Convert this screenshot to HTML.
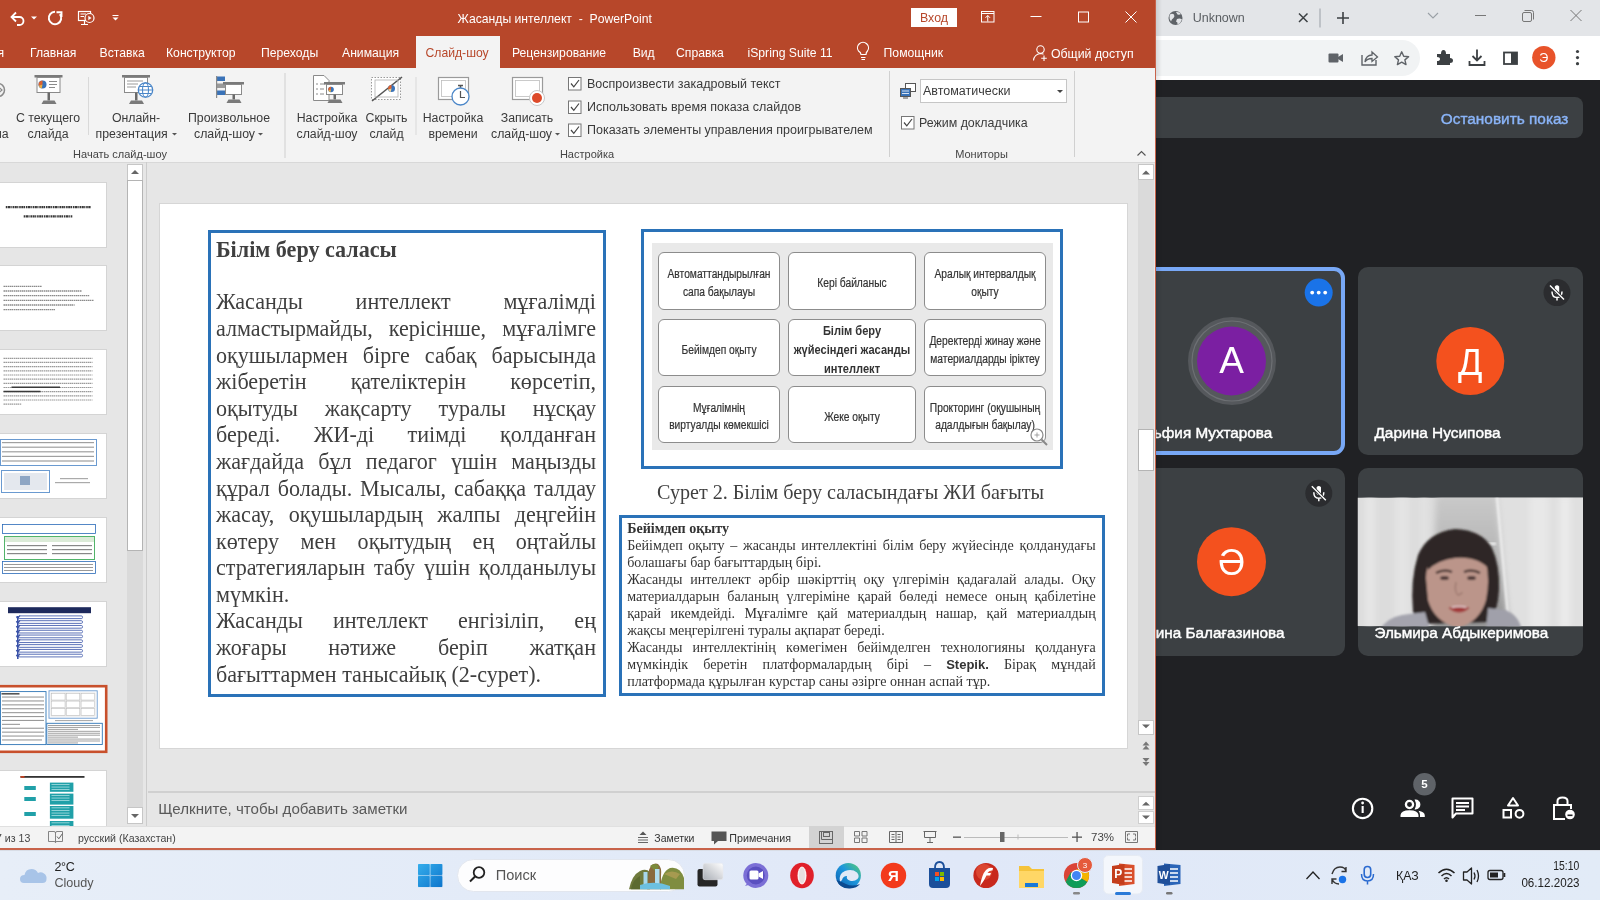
<!DOCTYPE html>
<html><head><meta charset="utf-8">
<style>
*{margin:0;padding:0;box-sizing:border-box}
html,body{width:1600px;height:900px;overflow:hidden;background:#202124;font-family:"Liberation Sans",sans-serif;position:relative}
.a{position:absolute}
.t{white-space:nowrap}
svg{overflow:visible}
#root{position:absolute;left:0;top:0;width:1600px;height:900px;overflow:hidden;will-change:transform}
</style></head><body><div id="root">
<!-- chrome -->
<div class="a" style="left:1156px;top:0px;width:444px;height:36px;background:#e3e5e8;"></div>
<div class="a" style="left:1156px;top:36px;width:444px;height:44px;background:#fff;"></div>
<div class="a" style="left:1156px;top:40px;width:264px;height:36px;background:#f1f3f4;border-radius:0 18px 18px 0;"></div>
<svg class="a" style="left:0px;top:0px;" width="1600" height="100" viewBox="0 0 1600 100"><circle cx="1175.5" cy="18" r="7" fill="#5f6368"/><path d="M1170 14.5 Q1172 13 1174 14.5 Q1175 16.5 1173.5 18 Q1171.5 19 1171 21.5 Q1169 19 1169.5 16Z" fill="#e3e5e8"/><path d="M1176 12 Q1179 11.5 1181 14 Q1179.5 15 1177.5 14.5Z M1177 19 Q1180 18 1182 19.5 Q1181 23 1177.5 24.5 Q1178 22 1176 21.5Z" fill="#e3e5e8"/><path d="M1299 13.5 L1307.5 22 M1307.5 13.5 L1299 22" stroke="#3c4043" stroke-width="1.5"/><rect x="1319.5" y="8.5" width="1" height="19" fill="#9aa0a6"/><path d="M1343 12 V24 M1337 18 H1349" stroke="#3c4043" stroke-width="1.6"/><path d="M1428 13 L1433 18 L1438 13" fill="none" stroke="#9aa0a6" stroke-width="1.1"/><path d="M1475 15.5 H1486" stroke="#777" stroke-width="1"/><rect x="1522.5" y="12.5" width="9" height="9" rx="1.5" fill="none" stroke="#777" stroke-width="1"/><path d="M1524.5 10.5 H1531.5 Q1533.5 10.5 1533.5 12.5 V19.5" fill="none" stroke="#777" stroke-width="1"/><path d="M1570.5 10 L1581.5 21 M1581.5 10 L1570.5 21" stroke="#777" stroke-width="1"/><rect x="1328.5" y="53.5" width="10" height="9" rx="1" fill="#5f6368"/><path d="M1338 57 L1343 54 V62 L1338 59Z" fill="#5f6368"/><path d="M1362 55 V65 H1376 V60" fill="none" stroke="#5f6368" stroke-width="1.4"/><path d="M1365 62 Q1366 55 1372 55 V52 L1377.5 57 L1372 61.5 V58.5 Q1367 58.5 1365 62Z" fill="none" stroke="#5f6368" stroke-width="1.3"/><path d="M1401.7 51.8 L1403.7 56.3 L1408.6 56.7 L1404.9 59.9 L1406 64.6 L1401.7 62.1 L1397.4 64.6 L1398.5 59.9 L1394.8 56.7 L1399.7 56.3Z" fill="none" stroke="#5f6368" stroke-width="1.4" stroke-linejoin="round"/><path d="M1437 54 H1441 Q1441 50 1443.5 50 Q1446 50 1446 54 H1450 V58 Q1453 58 1453 60.5 Q1453 63 1450 63 V65 H1437 V61 Q1440 61 1440 59 Q1440 57 1437 57Z" fill="#3c4043"/><path d="M1477 49.5 V60 M1472.5 56 L1477 60.5 L1481.5 56" fill="none" stroke="#3c4043" stroke-width="1.8"/><path d="M1469.5 61 V65 H1484.5 V61" fill="none" stroke="#3c4043" stroke-width="1.8"/><rect x="1504" y="52.5" width="13" height="11.5" fill="none" stroke="#3c4043" stroke-width="1.8"/><rect x="1511" y="52.5" width="6" height="11.5" fill="#3c4043"/><circle cx="1543.8" cy="57.6" r="11.7" fill="#e8532a"/><circle cx="1577.5" cy="51.5" r="1.6" fill="#3c4043"/><circle cx="1577.5" cy="57.6" r="1.6" fill="#3c4043"/><circle cx="1577.5" cy="63.7" r="1.6" fill="#3c4043"/></svg>
<div class="a t " style="top:10.78px;font-size:12.5px;line-height:14.37px;color:#5a5e62;left:1192.7px;">Unknown</div>
<div class="a t " style="top:50.98px;font-size:12.5px;line-height:14.37px;color:#fff;left:1543.8px;transform:translateX(-50%);">Э</div>
<!-- meet -->
<div class="a" style="left:1156px;top:80px;width:444px;height:770px;background:#202124;"></div>
<div class="a" style="left:1146px;top:97px;width:437px;height:41px;background:#3c4043;border-radius:8px;"></div>
<div class="a t " style="top:109.71px;font-size:15.4px;line-height:17.71px;color:#8ab4f8;right:31.59999999999991px;-webkit-text-stroke:0.4px #8ab4f8;">Остановить показ</div>
<div class="a" style="left:1140px;top:266.8px;width:205.3px;height:188.2px;background:#3c4043;border:4px solid #78a8f6;border-radius:11px;"></div>
<div class="a" style="left:1357.5px;top:267px;width:225.5px;height:188px;background:#3c4043;border-radius:10px;"></div>
<div class="a" style="left:1140px;top:468px;width:205px;height:187.5px;background:#3c4043;border-radius:10px;"></div>
<div class="a" style="left:1357.5px;top:468px;width:225.5px;height:187.5px;background:#3c4043;border-radius:10px;"></div>
<svg class="a" style="left:0px;top:0px;" width="1600" height="900" viewBox="0 0 1600 900"><circle cx="1318.7" cy="292.6" r="14" fill="#1a73e8"/><circle cx="1312.2" cy="292.6" r="1.9" fill="#fff"/><circle cx="1318.7" cy="292.6" r="1.9" fill="#fff"/><circle cx="1325.2" cy="292.6" r="1.9" fill="#fff"/><circle cx="1232" cy="361" r="44" fill="#55585c"/><circle cx="1232" cy="361" r="40" fill="none" stroke="#6d7074" stroke-width="1.2"/><circle cx="1231.5" cy="361" r="34.5" fill="#7b1fa2"/><circle cx="1557" cy="292.6" r="13.5" fill="#2b2c2f"/><path d="M1554.8 286.6 Q1557 284.1 1559.2 286.6 V293.1 Q1557 295.6 1554.8 293.1Z" fill="#fff"/><path d="M1552 291.6 Q1552 297.6 1557 297.6 Q1562 297.6 1562 291.6 M1557 297.6 V300.6" fill="none" stroke="#fff" stroke-width="1.5"/><path d="M1550 285.6 L1564 299.6" stroke="#2b2c2f" stroke-width="3"/><path d="M1550 285.6 L1564 299.6" stroke="#fff" stroke-width="1.4"/><circle cx="1470.3" cy="361" r="34" fill="#f4511e"/><circle cx="1318.8" cy="493.2" r="13.5" fill="#2b2c2f"/><path d="M1316.6 487.2 Q1318.8 484.7 1321.0 487.2 V493.7 Q1318.8 496.2 1316.6 493.7Z" fill="#fff"/><path d="M1313.8 492.2 Q1313.8 498.2 1318.8 498.2 Q1323.8 498.2 1323.8 492.2 M1318.8 498.2 V501.2" fill="none" stroke="#fff" stroke-width="1.5"/><path d="M1311.8 486.2 L1325.8 500.2" stroke="#2b2c2f" stroke-width="3"/><path d="M1311.8 486.2 L1325.8 500.2" stroke="#fff" stroke-width="1.4"/><circle cx="1231.5" cy="561.7" r="34.5" fill="#f4511e"/><circle cx="1362.6" cy="808.4" r="9.7" fill="none" stroke="#fff" stroke-width="2.1"/><rect x="1361.6" y="806" width="2.1" height="7" fill="#fff"/><circle cx="1362.6" cy="803" r="1.4" fill="#fff"/><circle cx="1409.5" cy="804.5" r="3.6" fill="none" stroke="#fff" stroke-width="2.3"/><path d="M1400.5 817 V815 Q1401 810.2 1409.5 810.2 Q1418 810.2 1418.5 815 V817Z" fill="#fff"/><path d="M1415.5 800.2 A4.3 4.3 0 0 1 1415.5 808.8 Q1417.5 804.5 1415.5 800.2Z" fill="#fff" stroke="#fff" stroke-width="1.2"/><path d="M1418.5 810.8 Q1424.8 811.8 1424.8 815.5 V817 H1420 V815 Q1420 812.5 1418.5 810.8Z" fill="#fff"/><circle cx="1424.5" cy="784.2" r="11.3" fill="#5f6368"/><path d="M1452.5 798.5 H1472.5 V813.5 H1456 L1452.5 817.5Z" fill="none" stroke="#fff" stroke-width="2" stroke-linejoin="round"/><path d="M1456 803 H1469 M1456 806.5 H1469 M1456 810 H1465" stroke="#fff" stroke-width="1.8"/><path d="M1513 798 L1518 805.5 H1508Z" fill="none" stroke="#fff" stroke-width="2" stroke-linejoin="round"/><rect x="1503.5" y="810" width="7.5" height="7.5" fill="none" stroke="#fff" stroke-width="2"/><circle cx="1519.5" cy="813.8" r="3.9" fill="none" stroke="#fff" stroke-width="2"/><path d="M1557.5 805 V801 Q1557.5 797.5 1562.5 797.5 Q1567.5 797.5 1567.5 801 V805" fill="none" stroke="#fff" stroke-width="2"/><path d="M1565 819 H1554 V805 H1571 V809" fill="none" stroke="#fff" stroke-width="2"/><circle cx="1570" cy="814.5" r="4.8" fill="#fff"/><rect x="1567.5" y="814.5" width="5" height="1.6" fill="#202124"/></svg>
<div class="a t " style="top:340.40px;font-size:37px;line-height:42.55px;color:#fff;left:1231.5px;transform:translateX(-50%);">A</div>
<div class="a t " style="top:341.83px;font-size:36px;line-height:41.4px;color:#fff;left:1470.3px;transform:translateX(-50%);">Д</div>
<div class="a t " style="top:541.83px;font-size:36px;line-height:41.4px;color:#fff;left:1231.5px;transform:translateX(-50%);">Ә</div>
<div class="a t " style="top:778.41px;font-size:11.5px;line-height:13.22px;color:#fff;font-weight:bold;left:1424.5px;transform:translateX(-50%);">5</div>
<div class="a t " style="top:424.10px;font-size:15.3px;line-height:17.59px;color:#fff;right:327.70000000000005px;-webkit-text-stroke:0.45px #fff;">ьфия Мухтарова</div>
<div class="a t " style="top:423.96px;font-size:15.45px;line-height:17.77px;color:#fff;left:1374.4px;-webkit-text-stroke:0.45px #fff;">Дарина Нусипова</div>
<div class="a t " style="top:624.30px;font-size:15.3px;line-height:17.59px;color:#fff;right:315.5999999999999px;-webkit-text-stroke:0.45px #fff;">ина Балағазинова</div>
<svg class="a" style="left:0px;top:0px;" width="1600" height="900" viewBox="0 0 1600 900"><defs><clipPath id="pc"><rect x="1357.5" y="497.5" width="225.5" height="128.70000000000005"/></clipPath><filter id="bl" x="-20%" y="-20%" width="140%" height="140%"><feGaussianBlur stdDeviation="3"/></filter><filter id="bl2" x="-20%" y="-20%" width="140%" height="140%"><feGaussianBlur stdDeviation="1.3"/></filter><linearGradient id="band" x1="0" y1="0" x2="0" y2="1"><stop offset="0" stop-color="#c9c9c9"/><stop offset="0.5" stop-color="#b4b4b4"/><stop offset="1" stop-color="#8e8e8e"/></linearGradient></defs><g clip-path="url(#pc)"><rect x="1357.5" y="497.5" width="225.5" height="128.70000000000005" fill="#dcdcdc"/><g filter="url(#bl)"><rect x="1365" y="495" width="10" height="135" fill="#e6e6e6"/><rect x="1395" y="495" width="14" height="135" fill="#e4e4e4"/><rect x="1420" y="495" width="8" height="135" fill="#e2e2e2"/><path d="M1436 495 H1497 L1509 630 H1432Z" fill="url(#band)"/><path d="M1497 495 H1590 V630 H1509Z" fill="#e0e0e0"/><rect x="1530" y="495" width="18" height="135" fill="#e8e8e8"/><rect x="1560" y="495" width="10" height="135" fill="#ebebeb"/></g><path d="M1497 497 L1509 626" stroke="#f4f4f4" stroke-width="2" filter="url(#bl2)"/><rect x="1483" y="542.5" width="13" height="2.5" fill="#f0f0f0" filter="url(#bl2)"/><g filter="url(#bl2)"><path d="M1413 612 Q1410 580 1418 555 Q1428 532 1455 529 Q1482 530 1492 548 Q1500 565 1499 590 Q1498 610 1490 622 L1420 624Z" fill="#2e2826"/><path d="M1380 630 Q1386 618 1402 615 L1425 612 L1430 630Z" fill="#a4a4ae"/><path d="M1488 608 L1505 610 Q1518 614 1522 630 H1486Z" fill="#a0a0aa"/><path d="M1426 578 Q1426 556 1447 554 Q1470 552 1486 562 Q1490 580 1486 600 Q1480 622 1458 628 Q1434 622 1428 600Z" fill="#bb958a"/><path d="M1428 560 Q1445 548 1472 552 Q1487 556 1490 570 Q1478 556 1455 558 Q1438 560 1428 570Z" fill="#2e2826"/><path d="M1436 573 Q1444 569 1452 572 M1464 572 Q1472 569 1480 573" stroke="#3a2a28" stroke-width="2.2" fill="none"/><ellipse cx="1444.5" cy="578" rx="4.5" ry="2" fill="#4a3634"/><ellipse cx="1471.5" cy="578" rx="4.5" ry="2" fill="#4a3634"/><path d="M1456 582 Q1454 592 1458 595 Q1462 594 1462 592" stroke="#9a766c" stroke-width="1.3" fill="none"/><path d="M1448.5 608 Q1459 602 1469.5 608 Q1459 617 1448.5 608Z" fill="#a23a3a"/><path d="M1451 606.8 Q1459 604 1467 606.8 L1466 608 Q1459 606 1452 608Z" fill="#e8dcdc"/></g></g></svg>
<div class="a t " style="top:624.30px;font-size:15.3px;line-height:17.59px;color:#fff;left:1374.4px;-webkit-text-stroke:0.45px #fff;">Эльмира Абдыкеримова</div>
<!-- ppt_top -->
<div class="a" style="left:0px;top:0px;width:1156px;height:68px;background:#b7472a;"></div>
<svg class="a" style="left:0px;top:0px;" width="130" height="36" viewBox="0 0 130 36">
<path d="M12 17 H19.5 A4 4 0 0 1 19.5 25 H17" fill="none" stroke="#fff" stroke-width="1.8"/>
<path d="M16 12.5 L11.5 17 L16 21.5" fill="none" stroke="#fff" stroke-width="1.8"/>
<path d="M31 16.5 H37 L34 19.5Z" fill="#fff"/>
<path d="M55 11.8 A6.2 6.2 0 1 0 59.9 14.2" fill="none" stroke="#fff" stroke-width="2"/>
<path d="M56.5 12.2 H61.5 V17" fill="none" stroke="#fff" stroke-width="1.9"/>
<rect x="78.5" y="11.5" width="12" height="9" fill="none" stroke="#fff" stroke-width="1.2"/>
<path d="M80.5 14 H86 M80.5 16.5 H84" stroke="#fff" stroke-width="1"/>
<circle cx="89.5" cy="18" r="4.5" fill="#b7472a" stroke="#fff" stroke-width="1.2"/>
<path d="M88.3 15.8 L91.5 18 L88.3 20.2Z" fill="#fff"/>
<path d="M84.5 20.5 V24 M81 24.5 H88" stroke="#fff" stroke-width="1.2"/>
<path d="M112.5 15.5 H118.5" stroke="#fff" stroke-width="1"/>
<path d="M112.5 17.5 H118.5 L115.5 20.5Z" fill="#fff"/>
</svg>
<div class="a t " style="top:11.96px;font-size:12.2px;line-height:14.03px;color:#fff;left:457.5px;">Жасанды интеллект&nbsp;&nbsp;-&nbsp;&nbsp;PowerPoint</div>
<div class="a" style="left:911px;top:8px;width:46px;height:19px;background:#fff;"></div>
<div class="a t " style="top:10.57px;font-size:12.4px;line-height:14.26px;color:#b7472a;left:934px;transform:translateX(-50%);">Вход</div>
<svg class="a" style="left:970px;top:0px;" width="180" height="36" viewBox="0 0 180 36">
<rect x="11.5" y="11.5" width="12.5" height="10.5" fill="none" stroke="#fff" stroke-width="1"/>
<path d="M11.5 13.5 H24" stroke="#fff" stroke-width="1"/>
<path d="M17.75 21.5 V15.5 M15.5 17.8 L17.75 15.5 L20 17.8" fill="none" stroke="#fff" stroke-width="1"/>
<path d="M60.5 16.5 H71.5" stroke="#fff" stroke-width="1"/>
<rect x="108.5" y="12" width="10" height="10" fill="none" stroke="#fff" stroke-width="1"/>
<path d="M155.5 11.5 L166.5 22.5 M166.5 11.5 L155.5 22.5" stroke="#fff" stroke-width="1"/>
</svg>
<div class="a" style="left:415.5px;top:36px;width:84.5px;height:32px;background:#f3f3f3;"></div>
<div class="a t " style="top:45.76px;font-size:12.2px;line-height:14.03px;color:#b7472a;left:425.5px;">Слайд-шоу</div>
<div class="a t " style="top:45.76px;font-size:12.2px;line-height:14.03px;color:#fff;right:1596px;">я</div>
<div class="a t " style="top:45.76px;font-size:12.2px;line-height:14.03px;color:#fff;left:30px;">Главная</div>
<div class="a t " style="top:45.76px;font-size:12.2px;line-height:14.03px;color:#fff;left:99.5px;">Вставка</div>
<div class="a t " style="top:45.76px;font-size:12.2px;line-height:14.03px;color:#fff;left:166px;">Конструктор</div>
<div class="a t " style="top:45.76px;font-size:12.2px;line-height:14.03px;color:#fff;left:261px;">Переходы</div>
<div class="a t " style="top:45.76px;font-size:12.2px;line-height:14.03px;color:#fff;left:342px;">Анимация</div>
<div class="a t " style="top:45.76px;font-size:12.2px;line-height:14.03px;color:#fff;left:512px;">Рецензирование</div>
<div class="a t " style="top:45.76px;font-size:12.2px;line-height:14.03px;color:#fff;left:632.7px;">Вид</div>
<div class="a t " style="top:45.76px;font-size:12.2px;line-height:14.03px;color:#fff;left:676px;">Справка</div>
<div class="a t " style="top:45.76px;font-size:12.2px;line-height:14.03px;color:#fff;left:747.5px;">iSpring Suite 11</div>
<div class="a t " style="top:45.76px;font-size:12.2px;line-height:14.03px;color:#fff;left:883.6px;">Помощник</div>
<div class="a t " style="top:46.67px;font-size:12.3px;line-height:14.14px;color:#fff;left:1051px;">Общий доступ</div>
<svg class="a" style="left:850px;top:36px;" width="30" height="32" viewBox="0 0 30 32">
<path d="M8 19 A5.5 5.5 0 1 1 17 19 Q15.5 20.5 15.5 22.5 H10.5 Q10.5 20.5 8 19Z" fill="none" stroke="#fff" stroke-width="1.2" transform="translate(0.5,-4)"/>
<path d="M11 21.5 H15.5 M11.5 23.5 H15" stroke="#fff" stroke-width="1.1"/>
</svg>
<svg class="a" style="left:1028px;top:36px;" width="22" height="32" viewBox="0 0 22 32">
<circle cx="12.5" cy="13.5" r="3.7" fill="none" stroke="#fff" stroke-width="1.1"/>
<path d="M5.5 24.5 Q6 18.5 12.5 17.5 Q14.5 17.5 15.5 18.2" fill="none" stroke="#fff" stroke-width="1.1"/>
<path d="M16 19.5 V25 M13.2 22.3 H18.8" stroke="#fff" stroke-width="1.1"/>
</svg>
<!-- ribbon -->
<div class="a" style="left:0px;top:68px;width:1156px;height:95px;background:#f3f3f3;"></div>
<div class="a" style="left:0px;top:162px;width:1156px;height:1px;background:#d8d8d8;"></div>
<svg class="a" style="left:0px;top:0px;" width="1156" height="170" viewBox="0 0 1156 170"><circle cx="-2" cy="90" r="6.5" fill="none" stroke="#8a8a8a" stroke-width="1.5"/><path d="M-1 87.5 L2 90 L-1 92.5" fill="none" stroke="#8a8a8a" stroke-width="1.2"/><rect x="34.5" y="75" width="28" height="2.5" fill="#7a7a7a"/><rect x="37.0" y="77.5" width="23" height="15" fill="#fff" stroke="#8a8a8a" stroke-width="1"/><rect x="47.5" y="92.5" width="2.5" height="8" fill="#6a6a6a"/><path d="M41.5 104.0 L43.5 100.5 H54.5 L56.5 104.0Z" fill="#7a7a7a"/><circle cx="42.5" cy="84.5" r="4" fill="#3a73b8"/><path d="M42.5 84.5 V80.5 A4 4 0 0 0 38.7 85.7Z" fill="#e0622d"/><path d="M42.5 84.5 L38.7 85.7 A4 4 0 0 0 41.7 88.5Z" fill="#f0b040"/><path d="M49 81.5 H57 M49 84.5 H57 M49 87.5 H55" stroke="#8a8a8a" stroke-width="1"/><rect x="122" y="75" width="28" height="2.5" fill="#7a7a7a"/><rect x="124.5" y="77.5" width="23" height="15" fill="#fff" stroke="#8a8a8a" stroke-width="1"/><rect x="135.0" y="92.5" width="2.5" height="8" fill="#6a6a6a"/><path d="M129.0 104.0 L131.0 100.5 H142.0 L144.0 104.0Z" fill="#7a7a7a"/><path d="M127 81 H143 M127 84 H138 M127 87 H136" stroke="#9a9a9a" stroke-width="1"/><circle cx="145.5" cy="90" r="7.2" fill="#fff" stroke="#4a86c8" stroke-width="1.3"/><ellipse cx="145.5" cy="90" rx="3" ry="7.2" fill="none" stroke="#4a86c8" stroke-width="1.1"/><path d="M138.3 90 H152.7 M139.5 86.5 H151.5 M139.5 93.5 H151.5" stroke="#4a86c8" stroke-width="1"/><rect x="216" y="76.5" width="9" height="4.5" fill="#3a73b8"/><rect x="216" y="83.5" width="9" height="4.5" fill="#9a9a9a"/><rect x="216" y="90.5" width="9" height="4.5" fill="#3a73b8"/><rect x="216" y="76" width="1.2" height="22" fill="#8a8a8a"/><rect x="223" y="82" width="21" height="2.5" fill="#7a7a7a"/><rect x="225.5" y="84.5" width="16" height="10" fill="#fff" stroke="#8a8a8a" stroke-width="1"/><rect x="232.5" y="94.5" width="2.5" height="5" fill="#6a6a6a"/><path d="M226.5 103.0 L228.5 99.5 H239.5 L241.5 103.0Z" fill="#7a7a7a"/><path d="M313.5 75.5 H324 L329 80.5 V100.5 H313.5Z" fill="#fff" stroke="#8a8a8a" stroke-width="1"/><path d="M316 84 h2 M316 89 h2 M316 94 h2 M320 84 h5 M320 89 h4 M320 94 h4" stroke="#8a8a8a" stroke-width="1"/><rect x="324" y="82" width="21" height="2.5" fill="#7a7a7a"/><rect x="326.5" y="84.5" width="16" height="10" fill="#fff" stroke="#8a8a8a" stroke-width="1"/><rect x="333.5" y="94.5" width="2.5" height="5" fill="#6a6a6a"/><path d="M327.5 103.0 L329.5 99.5 H340.5 L342.5 103.0Z" fill="#7a7a7a"/><circle cx="331" cy="89.5" r="2.8" fill="#3a73b8"/><path d="M331 89.5 V86.7 A2.8 2.8 0 0 0 328.34 90.34Z" fill="#e0622d"/><path d="M331 89.5 L328.34 90.34 A2.8 2.8 0 0 0 330.44 92.3Z" fill="#f0b040"/><rect x="371.5" y="77.5" width="29" height="22" fill="#fff" stroke="#9a9a9a" stroke-width="1" stroke-dasharray="1.5 1.5"/><path d="M372 101 L402 77" stroke="#555" stroke-width="1.6"/><rect x="375" y="80" width="23" height="17" fill="none" stroke="#b0b0b0" stroke-width="0.8"/><circle cx="391.5" cy="88.5" r="3.5" fill="#3a73b8"/><path d="M391.5 88.5 V85.0 A3.5 3.5 0 0 0 388.175 89.55Z" fill="#e0622d"/><path d="M391.5 88.5 L388.175 89.55 A3.5 3.5 0 0 0 390.8 92.0Z" fill="#f0d090"/><rect x="438.5" y="77.5" width="30" height="22" fill="#fff" stroke="#9a9a9a" stroke-width="1.2"/><rect x="441.5" y="80.5" width="24" height="16" fill="none" stroke="#bdbdbd" stroke-width="0.8"/><path d="M458 85.5 H463 M460.5 85.5 V88" stroke="#555" stroke-width="1.5"/><circle cx="460.5" cy="96.5" r="8.5" fill="#fff" stroke="#4a86c8" stroke-width="1.3"/><path d="M460.5 91 V97.5 H465" fill="none" stroke="#555" stroke-width="1.2"/><rect x="512.5" y="77.5" width="30" height="22" fill="#fff" stroke="#9a9a9a" stroke-width="1.2"/><rect x="515.5" y="80.5" width="24" height="16" fill="none" stroke="#bdbdbd" stroke-width="0.8"/><circle cx="537" cy="98" r="7.5" fill="#fff" stroke="#c8c8c8" stroke-width="1"/><circle cx="537" cy="98" r="5" fill="#dd4a2a"/><rect x="568.5" y="77.5" width="12.5" height="12.5" fill="#fff" stroke="#777" stroke-width="1"/><path d="M571 83.5 L573.8 86.8 L579 80" fill="none" stroke="#444" stroke-width="1.2"/><rect x="568.5" y="101.0" width="12.5" height="12.5" fill="#fff" stroke="#777" stroke-width="1"/><path d="M571 107.0 L573.8 110.3 L579 103.5" fill="none" stroke="#444" stroke-width="1.2"/><rect x="568.5" y="124.0" width="12.5" height="12.5" fill="#fff" stroke="#777" stroke-width="1"/><path d="M571 130.0 L573.8 133.3 L579 126.5" fill="none" stroke="#444" stroke-width="1.2"/><rect x="905.5" y="83.5" width="10" height="8" fill="#fff" stroke="#555" stroke-width="1"/><rect x="900.5" y="88.5" width="10" height="8" fill="#3a73b8" stroke="#555" stroke-width="1"/><path d="M902 91 H909 M902 93.5 H909" stroke="#fff" stroke-width="0.8"/><path d="M903 98 H908" stroke="#555" stroke-width="1"/><rect x="920.5" y="79.5" width="146" height="23" fill="#fff" stroke="#c6c6c6" stroke-width="1"/><path d="M1057 90 H1063 L1060 93Z" fill="#444"/><rect x="901.5" y="116.5" width="12.5" height="12.5" fill="#fff" stroke="#777" stroke-width="1"/><path d="M904 122.5 L906.8 125.8 L912 119" fill="none" stroke="#444" stroke-width="1.2"/><rect x="88" y="77" width="1" height="58" fill="#d9d9d9"/><rect x="284.5" y="73" width="1" height="85" fill="#d0d0d0"/><rect x="415.5" y="77" width="1" height="58" fill="#d9d9d9"/><rect x="889" y="71" width="1" height="86" fill="#d0d0d0"/><rect x="1074" y="71" width="1" height="86" fill="#d0d0d0"/><path d="M1137.5 155.5 L1141.5 151.5 L1145.5 155.5" fill="none" stroke="#555" stroke-width="1.1"/></svg>
<div class="a t " style="top:126.67px;font-size:12.3px;line-height:14.14px;color:#3a3a3a;left:-5px;">на</div>
<div class="a t " style="top:110.67px;font-size:12.3px;line-height:14.14px;color:#3a3a3a;left:48px;transform:translateX(-50%);">С текущего</div>
<div class="a t " style="top:126.67px;font-size:12.3px;line-height:14.14px;color:#3a3a3a;left:48px;transform:translateX(-50%);">слайда</div>
<div class="a t " style="top:110.67px;font-size:12.3px;line-height:14.14px;color:#3a3a3a;left:136px;transform:translateX(-50%);">Онлайн-</div>
<div class="a t " style="top:126.67px;font-size:12.3px;line-height:14.14px;color:#3a3a3a;left:95.6px;">презентация</div>
<div class="a t " style="top:110.67px;font-size:12.3px;line-height:14.14px;color:#3a3a3a;left:229px;transform:translateX(-50%);">Произвольное</div>
<div class="a t " style="top:126.67px;font-size:12.3px;line-height:14.14px;color:#3a3a3a;left:194px;">слайд-шоу</div>
<div class="a t " style="top:110.67px;font-size:12.3px;line-height:14.14px;color:#3a3a3a;left:327px;transform:translateX(-50%);">Настройка</div>
<div class="a t " style="top:126.67px;font-size:12.3px;line-height:14.14px;color:#3a3a3a;left:327px;transform:translateX(-50%);">слайд-шоу</div>
<div class="a t " style="top:110.67px;font-size:12.3px;line-height:14.14px;color:#3a3a3a;left:386.5px;transform:translateX(-50%);">Скрыть</div>
<div class="a t " style="top:126.67px;font-size:12.3px;line-height:14.14px;color:#3a3a3a;left:386.5px;transform:translateX(-50%);">слайд</div>
<div class="a t " style="top:110.67px;font-size:12.3px;line-height:14.14px;color:#3a3a3a;left:453px;transform:translateX(-50%);">Настройка</div>
<div class="a t " style="top:126.67px;font-size:12.3px;line-height:14.14px;color:#3a3a3a;left:453px;transform:translateX(-50%);">времени</div>
<div class="a t " style="top:110.67px;font-size:12.3px;line-height:14.14px;color:#3a3a3a;left:527px;transform:translateX(-50%);">Записать</div>
<div class="a t " style="top:126.67px;font-size:12.3px;line-height:14.14px;color:#3a3a3a;left:491px;">слайд-шоу</div>
<svg class="a" style="left:0px;top:0px;" width="600" height="170" viewBox="0 0 600 170"><path d="M172 133 H177 L174.5 135.5Z" fill="#555"/><path d="M258 133 H263 L260.5 135.5Z" fill="#555"/><path d="M555 133 H560 L557.5 135.5Z" fill="#555"/></svg>
<div class="a t " style="top:76.88px;font-size:12.5px;line-height:14.37px;color:#3a3a3a;left:587px;">Воспроизвести закадровый текст</div>
<div class="a t " style="top:100.08px;font-size:12.5px;line-height:14.37px;color:#3a3a3a;left:587px;">Использовать время показа слайдов</div>
<div class="a t " style="top:123.18px;font-size:12.5px;line-height:14.37px;color:#3a3a3a;left:587px;">Показать элементы управления проигрывателем</div>
<div class="a t " style="top:84.48px;font-size:12.5px;line-height:14.37px;color:#3a3a3a;left:923px;">Автоматически</div>
<div class="a t " style="top:116.07px;font-size:12.4px;line-height:14.26px;color:#3a3a3a;left:919px;">Режим докладчика</div>
<div class="a t " style="top:148.06px;font-size:11px;line-height:12.65px;color:#444;left:120px;transform:translateX(-50%);">Начать слайд-шоу</div>
<div class="a t " style="top:148.06px;font-size:11px;line-height:12.65px;color:#444;left:587px;transform:translateX(-50%);">Настройка</div>
<div class="a t " style="top:148.06px;font-size:11px;line-height:12.65px;color:#444;left:981.5px;transform:translateX(-50%);">Мониторы</div>
<!-- ppt_main -->
<div class="a" style="left:0px;top:163px;width:1156px;height:664px;background:#e6e6e6;"></div>
<div class="a" style="left:-8px;top:183px;width:114px;height:64px;background:#fff;box-shadow:0 0 0 1px #d4d4d4;"></div>
<div class="a" style="left:-8px;top:266px;width:114px;height:64px;background:#fff;box-shadow:0 0 0 1px #d4d4d4;"></div>
<div class="a" style="left:-8px;top:350px;width:114px;height:64px;background:#fff;box-shadow:0 0 0 1px #d4d4d4;"></div>
<div class="a" style="left:-8px;top:434px;width:114px;height:64px;background:#fff;box-shadow:0 0 0 1px #d4d4d4;"></div>
<div class="a" style="left:-8px;top:518px;width:114px;height:64px;background:#fff;box-shadow:0 0 0 1px #d4d4d4;"></div>
<div class="a" style="left:-8px;top:602px;width:114px;height:64px;background:#fff;box-shadow:0 0 0 1px #d4d4d4;"></div>
<div class="a" style="left:-8px;top:686px;width:114px;height:64px;background:#fff;box-shadow:0 0 0 1px #d4d4d4;"></div>
<div class="a" style="left:-8px;top:771px;width:114px;height:64px;background:#fff;box-shadow:0 0 0 1px #d4d4d4;"></div>
<svg class="a" style="left:0px;top:0px;" width="150" height="830" viewBox="0 0 150 830"><path d="M5.8 207.1 H91 M23.7 216.4 H72.8" stroke="#3a3a3a" stroke-width="2.2" stroke-dasharray="1.6 0.5 2.2 0.4 1.2 0.8"/><path d="M3.5 286.3 H42" stroke="#8a8a8a" stroke-width="1.3" stroke-dasharray="1.5 0.4 2 0.6 1 0.5"/><path d="M3.5 290.98 H82" stroke="#8a8a8a" stroke-width="1.3" stroke-dasharray="1.5 0.4 2 0.6 1 0.5"/><path d="M3.5 295.66 H89.6" stroke="#8a8a8a" stroke-width="1.3" stroke-dasharray="1.5 0.4 2 0.6 1 0.5"/><path d="M3.5 300.34000000000003 H94" stroke="#8a8a8a" stroke-width="1.3" stroke-dasharray="1.5 0.4 2 0.6 1 0.5"/><path d="M3.5 305.02 H74.6" stroke="#8a8a8a" stroke-width="1.3" stroke-dasharray="1.5 0.4 2 0.6 1 0.5"/><path d="M3.5 309.7 H55" stroke="#8a8a8a" stroke-width="1.3" stroke-dasharray="1.5 0.4 2 0.6 1 0.5"/><path d="M3.5 358.3 H92.5" stroke="#9a9a9a" stroke-width="1.2" stroke-dasharray="1.5 0.4 2 0.6 1 0.5"/><path d="M3.5 362.47 H92.5" stroke="#9a9a9a" stroke-width="1.2" stroke-dasharray="1.5 0.4 2 0.6 1 0.5"/><path d="M3.5 366.64 H92.5" stroke="#9a9a9a" stroke-width="1.2" stroke-dasharray="1.5 0.4 2 0.6 1 0.5"/><path d="M3.5 370.81 H92.5" stroke="#9a9a9a" stroke-width="1.2" stroke-dasharray="1.5 0.4 2 0.6 1 0.5"/><path d="M3.5 374.98 H92.5" stroke="#9a9a9a" stroke-width="1.2" stroke-dasharray="1.5 0.4 2 0.6 1 0.5"/><path d="M3.5 379.15000000000003 H92.5" stroke="#9a9a9a" stroke-width="1.2" stroke-dasharray="1.5 0.4 2 0.6 1 0.5"/><path d="M3.5 383.32 H92.5" stroke="#9a9a9a" stroke-width="1.2" stroke-dasharray="1.5 0.4 2 0.6 1 0.5"/><path d="M3.5 387.49 H92.5" stroke="#9a9a9a" stroke-width="1.2" stroke-dasharray="1.5 0.4 2 0.6 1 0.5"/><path d="M3.5 391.66 H92.5" stroke="#9a9a9a" stroke-width="1.2" stroke-dasharray="1.5 0.4 2 0.6 1 0.5"/><path d="M3.5 395.83000000000004 H92.5" stroke="#9a9a9a" stroke-width="1.2" stroke-dasharray="1.5 0.4 2 0.6 1 0.5"/><path d="M3.5 400.0 H92.5" stroke="#9a9a9a" stroke-width="1.2" stroke-dasharray="1.5 0.4 2 0.6 1 0.5"/><path d="M3.5 404.17 H21.7" stroke="#9a9a9a" stroke-width="1.2" stroke-dasharray="1.5 0.4 2 0.6 1 0.5"/><path d="M11.5 387.2 H60 M3.5 391.5 H40.5" stroke="#3a3a3a" stroke-width="1.4"/><rect x="0.5" y="439.5" width="96" height="26" fill="none" stroke="#6a9ad0" stroke-width="1"/><rect x="2" y="442.0" width="92" height="1.2" fill="#a0a0a0"/><rect x="2" y="446.6" width="92" height="1.2" fill="#a0a0a0"/><rect x="2" y="451.2" width="92" height="1.2" fill="#a0a0a0"/><rect x="2" y="455.8" width="92" height="1.2" fill="#a0a0a0"/><rect x="2" y="460.4" width="92" height="1.2" fill="#a0a0a0"/><rect x="1.5" y="470.5" width="48" height="22" fill="#fff" stroke="#6a9ad0" stroke-width="1"/><rect x="4" y="473" width="43" height="17" fill="#e4e8ee"/><rect x="20" y="476" width="10" height="9" fill="#8ea6c4"/><rect x="60" y="478" width="28" height="1.2" fill="#aaa"/><rect x="55" y="482" width="35" height="1.2" fill="#aaa"/><rect x="2.5" y="524.5" width="93" height="9" fill="none" stroke="#2a6ab8" stroke-width="0.8"/><rect x="4.5" y="536.5" width="90" height="23" fill="#fff" stroke="#52b46a" stroke-width="1"/><rect x="5" y="537" width="89" height="5" fill="#dcebd8"/><rect x="7" y="545" width="40" height="1.2" fill="#888"/><rect x="52" y="545" width="40" height="1.2" fill="#888"/><rect x="7" y="549" width="40" height="1.2" fill="#888"/><rect x="52" y="549" width="40" height="1.2" fill="#888"/><rect x="7" y="553" width="40" height="1.2" fill="#888"/><rect x="52" y="553" width="40" height="1.2" fill="#888"/><rect x="2.5" y="561.5" width="93" height="12" fill="none" stroke="#2a6ab8" stroke-width="0.8"/><rect x="4" y="564" width="89" height="1" fill="#999"/><rect x="4" y="567" width="89" height="1" fill="#999"/><rect x="4" y="570" width="89" height="1" fill="#999"/><rect x="8" y="607.2" width="83" height="6" fill="#1e2a5c"/><rect x="18.5" y="615.9" width="64" height="2.7" rx="1.2" fill="#fff" stroke="#4a62b0" stroke-width="0.9"/><path d="M16.3 616.5 l1.3 2 l2.4 -3" stroke="#3a52a8" stroke-width="1.2" fill="none"/><rect x="18.5" y="620.6899999999999" width="64" height="2.7" rx="1.2" fill="#fff" stroke="#4a62b0" stroke-width="0.9"/><path d="M16.3 621.29 l1.3 2 l2.4 -3" stroke="#3a52a8" stroke-width="1.2" fill="none"/><rect x="18.5" y="625.48" width="64" height="2.7" rx="1.2" fill="#fff" stroke="#4a62b0" stroke-width="0.9"/><path d="M16.3 626.08 l1.3 2 l2.4 -3" stroke="#3a52a8" stroke-width="1.2" fill="none"/><rect x="18.5" y="630.27" width="64" height="2.7" rx="1.2" fill="#fff" stroke="#4a62b0" stroke-width="0.9"/><path d="M16.3 630.87 l1.3 2 l2.4 -3" stroke="#3a52a8" stroke-width="1.2" fill="none"/><rect x="18.5" y="635.06" width="64" height="2.7" rx="1.2" fill="#fff" stroke="#4a62b0" stroke-width="0.9"/><path d="M16.3 635.66 l1.3 2 l2.4 -3" stroke="#3a52a8" stroke-width="1.2" fill="none"/><rect x="18.5" y="639.85" width="64" height="2.7" rx="1.2" fill="#fff" stroke="#4a62b0" stroke-width="0.9"/><path d="M16.3 640.45 l1.3 2 l2.4 -3" stroke="#3a52a8" stroke-width="1.2" fill="none"/><rect x="18.5" y="644.64" width="64" height="2.7" rx="1.2" fill="#fff" stroke="#4a62b0" stroke-width="0.9"/><path d="M16.3 645.24 l1.3 2 l2.4 -3" stroke="#3a52a8" stroke-width="1.2" fill="none"/><rect x="18.5" y="649.43" width="64" height="2.7" rx="1.2" fill="#fff" stroke="#4a62b0" stroke-width="0.9"/><path d="M16.3 650.03 l1.3 2 l2.4 -3" stroke="#3a52a8" stroke-width="1.2" fill="none"/><rect x="18.5" y="654.22" width="64" height="2.7" rx="1.2" fill="#fff" stroke="#4a62b0" stroke-width="0.9"/><path d="M16.3 654.82 l1.3 2 l2.4 -3" stroke="#3a52a8" stroke-width="1.2" fill="none"/><rect x="17" y="616" width="1.6" height="43" fill="#3a52a8"/><rect x="-7" y="686.2" width="113.2" height="65.6" fill="#fff" stroke="#c8502c" stroke-width="2.6"/><rect x="0.5" y="691.6" width="45.5" height="53" fill="#fff" stroke="#2e75b6" stroke-width="0.9"/><rect x="1.5" y="693" width="18" height="1.6" fill="#555"/><rect x="2" y="696.5" width="42" height="1.1" fill="#9a9a9a"/><rect x="2" y="700.4" width="42" height="1.1" fill="#9a9a9a"/><rect x="2" y="704.3" width="42" height="1.1" fill="#9a9a9a"/><rect x="2" y="708.2" width="42" height="1.1" fill="#9a9a9a"/><rect x="2" y="712.1" width="42" height="1.1" fill="#9a9a9a"/><rect x="2" y="716.0" width="42" height="1.1" fill="#9a9a9a"/><rect x="2" y="719.9" width="42" height="1.1" fill="#9a9a9a"/><rect x="2" y="723.8" width="18" height="1.1" fill="#9a9a9a"/><rect x="2" y="727.7" width="42" height="1.1" fill="#9a9a9a"/><rect x="2" y="731.6" width="42" height="1.1" fill="#9a9a9a"/><rect x="2" y="735.5" width="42" height="1.1" fill="#9a9a9a"/><rect x="2" y="739.4" width="40" height="1.1" fill="#9a9a9a"/><rect x="49" y="690.8" width="48.2" height="27.4" fill="#fff" stroke="#6a9ad0" stroke-width="0.9"/><rect x="50.5" y="692.5" width="45" height="24" fill="#e6e6e6"/><rect x="51.5" y="693.5" width="13.5" height="6.5" fill="#fff" stroke="#b0b0b0" stroke-width="0.4"/><rect x="66.3" y="693.5" width="13.5" height="6.5" fill="#fff" stroke="#b0b0b0" stroke-width="0.4"/><rect x="81.1" y="693.5" width="13.5" height="6.5" fill="#fff" stroke="#b0b0b0" stroke-width="0.4"/><rect x="51.5" y="701.1" width="13.5" height="6.5" fill="#fff" stroke="#b0b0b0" stroke-width="0.4"/><rect x="66.3" y="701.1" width="13.5" height="6.5" fill="#fff" stroke="#b0b0b0" stroke-width="0.4"/><rect x="81.1" y="701.1" width="13.5" height="6.5" fill="#fff" stroke="#b0b0b0" stroke-width="0.4"/><rect x="51.5" y="708.7" width="13.5" height="6.5" fill="#fff" stroke="#b0b0b0" stroke-width="0.4"/><rect x="66.3" y="708.7" width="13.5" height="6.5" fill="#fff" stroke="#b0b0b0" stroke-width="0.4"/><rect x="81.1" y="708.7" width="13.5" height="6.5" fill="#fff" stroke="#b0b0b0" stroke-width="0.4"/><rect x="55" y="720.2" width="38" height="0.9" fill="#999"/><rect x="46.8" y="723.3" width="55.5" height="21.2" fill="#fff" stroke="#2e75b6" stroke-width="0.9"/><rect x="48" y="725.0" width="52" height="0.8" fill="#8a8a8a"/><rect x="48" y="726.95" width="52" height="0.8" fill="#8a8a8a"/><rect x="48" y="728.9" width="30" height="0.8" fill="#8a8a8a"/><rect x="48" y="730.85" width="52" height="0.8" fill="#8a8a8a"/><rect x="48" y="732.8" width="52" height="0.8" fill="#8a8a8a"/><rect x="48" y="734.75" width="52" height="0.8" fill="#8a8a8a"/><rect x="48" y="736.7" width="30" height="0.8" fill="#8a8a8a"/><rect x="48" y="738.65" width="52" height="0.8" fill="#8a8a8a"/><rect x="48" y="740.6" width="52" height="0.8" fill="#8a8a8a"/><rect x="48" y="742.55" width="30" height="0.8" fill="#8a8a8a"/><rect x="20.5" y="776" width="64" height="1.8" fill="#333"/><rect x="20.5" y="776" width="4" height="1.8" fill="#c04020"/><rect x="24.3" y="786" width="11.5" height="4" fill="#20a0a8"/><rect x="24.3" y="797" width="11.5" height="4" fill="#20a0a8"/><rect x="24.3" y="812" width="11.5" height="4" fill="#20a0a8"/><rect x="49.9" y="782.6" width="23.5" height="9.199999999999932" fill="#20a0a8"/><rect x="51.5" y="784.1" width="18" height="0.7" fill="#bfe8ea"/><rect x="51.5" y="786.7" width="18" height="0.7" fill="#bfe8ea"/><rect x="51.5" y="789.3000000000001" width="18" height="0.7" fill="#bfe8ea"/><rect x="49.9" y="793.6" width="23.5" height="11.0" fill="#20a0a8"/><rect x="51.5" y="795.1" width="18" height="0.7" fill="#bfe8ea"/><rect x="51.5" y="797.7" width="18" height="0.7" fill="#bfe8ea"/><rect x="51.5" y="800.3000000000001" width="18" height="0.7" fill="#bfe8ea"/><rect x="49.9" y="806" width="23.5" height="12.700000000000045" fill="#20a0a8"/><rect x="51.5" y="807.5" width="18" height="0.7" fill="#bfe8ea"/><rect x="51.5" y="810.1" width="18" height="0.7" fill="#bfe8ea"/><rect x="51.5" y="812.7" width="18" height="0.7" fill="#bfe8ea"/><rect x="51.5" y="815.3" width="18" height="0.7" fill="#bfe8ea"/><rect x="49.9" y="821" width="23.5" height="9" fill="#20a0a8"/><rect x="51.5" y="822.5" width="18" height="0.7" fill="#bfe8ea"/><rect x="51.5" y="825.1" width="18" height="0.7" fill="#bfe8ea"/><rect x="51.5" y="827.7" width="18" height="0.7" fill="#bfe8ea"/></svg>
<div class="a" style="left:127px;top:164px;width:16px;height:660px;background:#dadada;"></div>
<div class="a" style="left:127px;top:164px;width:16px;height:17px;background:#fff;border:1px solid #c6c6c6;"></div>
<div class="a" style="left:127px;top:180px;width:16px;height:371px;background:#fff;border:1px solid #b4b4b4;"></div>
<div class="a" style="left:127px;top:807px;width:16px;height:17px;background:#fff;border:1px solid #c6c6c6;"></div>
<svg class="a" style="left:127px;top:164px;" width="16" height="660" viewBox="0 0 16 660"><path d="M4 10 L8 6 L12 10Z" fill="#666"/><path d="M4 650 L8 654 L12 650Z" fill="#666"/></svg>
<div class="a" style="left:146px;top:162px;width:1px;height:665px;background:#cccccc;"></div>
<div class="a" style="left:159.5px;top:204px;width:967.5px;height:544px;background:#fff;box-shadow:0 0 0 1px #d6d6d6;"></div>
<div class="a" style="left:1138px;top:164px;width:16px;height:571px;background:#dadada;"></div>
<div class="a" style="left:1138px;top:164px;width:16px;height:16px;background:#fff;border:1px solid #c6c6c6;"></div>
<div class="a" style="left:1138px;top:429px;width:16px;height:42px;background:#fff;border:1px solid #b4b4b4;"></div>
<div class="a" style="left:1138px;top:719.5px;width:16px;height:15px;background:#fff;border:1px solid #c6c6c6;"></div>
<svg class="a" style="left:1138px;top:165px;" width="16" height="620" viewBox="0 0 16 620"><path d="M4 9.5 L8 5.5 L12 9.5Z" fill="#666"/><path d="M4 559.5 L8 563.3 L12 559.5Z" fill="#666"/><path d="M4.5 580.5 L8 576.5 L11.5 580.5Z M4.5 584.5 L8 580.5 L11.5 584.5Z" fill="#777"/><path d="M4.5 593 L8 597 L11.5 593Z M4.5 597 L8 601 L11.5 597Z" fill="#777"/></svg>
<div class="a" style="left:148px;top:791px;width:1008px;height:1.5px;background:#d0d0d0;"></div>
<div class="a t " style="top:800.29px;font-size:15.1px;line-height:17.36px;color:#595959;left:158.2px;">Щелкните, чтобы добавить заметки</div>
<div class="a" style="left:1138px;top:796px;width:16px;height:14px;background:#fff;border:1px solid #cfcfcf;"></div>
<div class="a" style="left:1138px;top:811px;width:16px;height:13px;background:#fff;border:1px solid #cfcfcf;"></div>
<svg class="a" style="left:1138px;top:796px;" width="16" height="30" viewBox="0 0 16 30"><path d="M4 9.5 L8 5.8 L12 9.5Z" fill="#666"/><path d="M4 19.5 L8 23.2 L12 19.5Z" fill="#666"/></svg>
<div class="a" style="left:0px;top:826px;width:1156px;height:23px;background:#f3f3f3;border-top:1px solid #e0e0e0;"></div>
<div class="a t " style="top:832.23px;font-size:10.6px;line-height:12.19px;color:#444;left:-4px;">7 из 13</div>
<svg class="a" style="left:40px;top:826px;" width="30" height="22" viewBox="0 0 30 22"><path d="M8.5 5.5 H14 Q15.5 5.5 15.5 7 V16.5 Q15.5 15.5 14 15.5 H8.5Z M15.5 7 Q15.5 5.5 17 5.5 H22.5 V15.5 H17 Q15.5 15.5 15.5 16.5" fill="none" stroke="#777" stroke-width="0.9"/><path d="M17 10.5 L18.8 12.8 L22.5 7.5" fill="none" stroke="#666" stroke-width="1"/></svg>
<div class="a t " style="top:832.23px;font-size:10.6px;line-height:12.19px;color:#444;left:78px;">русский (Казахстан)</div>
<svg class="a" style="left:630px;top:826px;" width="110" height="22" viewBox="0 0 110 22"><path d="M9.5 9 L13 5.5 L16.5 9Z" fill="#555"/><path d="M8 11.5 H18 M8 14 H18 M8 16.5 H18" stroke="#666" stroke-width="1"/><path d="M81.5 5.5 H96.5 V15 H88 L84 18.5 V15 H81.5Z" fill="#555"/></svg>
<div class="a t " style="top:831.83px;font-size:10.5px;line-height:12.07px;color:#333;left:654.3px;">Заметки</div>
<div class="a t " style="top:831.64px;font-size:10.7px;line-height:12.3px;color:#333;left:729.3px;">Примечания</div>
<div class="a" style="left:809px;top:826px;width:35px;height:22px;background:#d3d3d3;"></div>
<svg class="a" style="left:800px;top:826px;" width="350" height="22" viewBox="0 0 350 22"><rect x="19.5" y="5.5" width="13" height="12" fill="none" stroke="#666" stroke-width="1"/><rect x="23.5" y="6.5" width="6" height="4" fill="none" stroke="#666" stroke-width="1"/><path d="M21.5 5.5 V13.5 H32.5" fill="none" stroke="#666" stroke-width="1"/><path d="M54.5 5.5 h5 v4.5 h-5z M62 5.5 h5 v4.5 h-5z M54.5 12 h5 v4.5 h-5z M62 12 h5 v4.5 h-5z" fill="none" stroke="#777" stroke-width="1"/><path d="M89.5 5.5 H102.5 V16.5 H89.5Z M96 5.5 V16.5 M91.5 8.5 h3 M91.5 11 h3 M91.5 13.5 h3 M97.5 8.5 h3 M97.5 11 h3 M97.5 13.5 h3" fill="none" stroke="#666" stroke-width="1"/><path d="M123.5 5.5 H136.5 M124.5 5.5 V11.5 H135.5 V5.5 M130 11.5 V16.5 M127 16.5 H133" fill="none" stroke="#666" stroke-width="1"/><rect x="153" y="10.5" width="8" height="1.3" fill="#555"/><rect x="164" y="11" width="104" height="1" fill="#bbb"/><rect x="200" y="6" width="4.5" height="10" fill="#666"/><rect x="217.5" y="8.5" width="1" height="5" fill="#bbb"/><rect x="272" y="10.5" width="10" height="1.3" fill="#555"/><rect x="276.4" y="6" width="1.3" height="10" fill="#555"/><path d="M325.5 5.5 H337.5 V16.5 H325.5Z" fill="none" stroke="#777" stroke-width="1"/><path d="M327.5 8 h2.5 v-0 M327.5 8 v2.5 M335.5 8 h-2.5 M335.5 8 v2.5 M327.5 14 h2.5 M327.5 14 v-2.5 M335.5 14 h-2.5 M335.5 14 v-2.5" stroke="#777" stroke-width="1"/></svg>
<div class="a t " style="top:830.91px;font-size:11.5px;line-height:13.22px;color:#444;left:1091px;">73%</div>
<div class="a" style="left:0px;top:848px;width:1156px;height:1.5px;background:#c8634a;"></div>
<div class="a" style="left:1154.5px;top:0px;width:1.5px;height:850px;background:#c8634a;"></div>
<div class="a" style="left:208px;top:230px;width:398px;height:467px;background:#fff;border:3px solid #2a72b8;"></div>
<div class="a t " style="top:237.24px;font-size:22.1px;line-height:25.41px;color:#404040;font-weight:bold;font-family:'Liberation Serif',serif;left:216px;">Білім беру саласы</div>
<div class="a" style="left:216px;top:289.44px;width:380px;font-size:22.1px;line-height:25.41px;color:#3f3f3f;font-family:'Liberation Serif',serif;white-space:nowrap;text-align:justify;text-align-last:justify;">Жасанды интеллект мұғалімді</div>
<div class="a" style="left:216px;top:316.02px;width:380px;font-size:22.1px;line-height:25.41px;color:#3f3f3f;font-family:'Liberation Serif',serif;white-space:nowrap;text-align:justify;text-align-last:justify;">алмастырмайды, керісінше, мұғалімге</div>
<div class="a" style="left:216px;top:342.60px;width:380px;font-size:22.1px;line-height:25.41px;color:#3f3f3f;font-family:'Liberation Serif',serif;white-space:nowrap;text-align:justify;text-align-last:justify;">оқушылармен бірге сабақ барысында</div>
<div class="a" style="left:216px;top:369.18px;width:380px;font-size:22.1px;line-height:25.41px;color:#3f3f3f;font-family:'Liberation Serif',serif;white-space:nowrap;text-align:justify;text-align-last:justify;">жіберетін қателіктерін көрсетіп,</div>
<div class="a" style="left:216px;top:395.76px;width:380px;font-size:22.1px;line-height:25.41px;color:#3f3f3f;font-family:'Liberation Serif',serif;white-space:nowrap;text-align:justify;text-align-last:justify;">оқытуды жақсарту туралы нұсқау</div>
<div class="a" style="left:216px;top:422.34px;width:380px;font-size:22.1px;line-height:25.41px;color:#3f3f3f;font-family:'Liberation Serif',serif;white-space:nowrap;text-align:justify;text-align-last:justify;">береді. ЖИ-ді тиімді қолданған</div>
<div class="a" style="left:216px;top:448.92px;width:380px;font-size:22.1px;line-height:25.41px;color:#3f3f3f;font-family:'Liberation Serif',serif;white-space:nowrap;text-align:justify;text-align-last:justify;">жағдайда бұл педагог үшін маңызды</div>
<div class="a" style="left:216px;top:475.50px;width:380px;font-size:22.1px;line-height:25.41px;color:#3f3f3f;font-family:'Liberation Serif',serif;white-space:nowrap;text-align:justify;text-align-last:justify;">құрал болады. Мысалы, сабаққа талдау</div>
<div class="a" style="left:216px;top:502.08px;width:380px;font-size:22.1px;line-height:25.41px;color:#3f3f3f;font-family:'Liberation Serif',serif;white-space:nowrap;text-align:justify;text-align-last:justify;">жасау, оқушылардың жалпы деңгейін</div>
<div class="a" style="left:216px;top:528.66px;width:380px;font-size:22.1px;line-height:25.41px;color:#3f3f3f;font-family:'Liberation Serif',serif;white-space:nowrap;text-align:justify;text-align-last:justify;">көтеру мен оқытудың ең оңтайлы</div>
<div class="a" style="left:216px;top:555.24px;width:380px;font-size:22.1px;line-height:25.41px;color:#3f3f3f;font-family:'Liberation Serif',serif;white-space:nowrap;text-align:justify;text-align-last:justify;">стратегияларын табу үшін қолданылуы</div>
<div class="a" style="left:216px;top:581.82px;width:380px;font-size:22.1px;line-height:25.41px;color:#3f3f3f;font-family:'Liberation Serif',serif;white-space:nowrap;">мүмкін.</div>
<div class="a" style="left:216px;top:608.40px;width:380px;font-size:22.1px;line-height:25.41px;color:#3f3f3f;font-family:'Liberation Serif',serif;white-space:nowrap;text-align:justify;text-align-last:justify;">Жасанды интеллект енгізіліп, ең</div>
<div class="a" style="left:216px;top:634.98px;width:380px;font-size:22.1px;line-height:25.41px;color:#3f3f3f;font-family:'Liberation Serif',serif;white-space:nowrap;text-align:justify;text-align-last:justify;">жоғары нәтиже беріп жатқан</div>
<div class="a" style="left:216px;top:661.56px;width:380px;font-size:22.1px;line-height:25.41px;color:#3f3f3f;font-family:'Liberation Serif',serif;white-space:nowrap;">бағыттармен танысайық (2-сурет).</div>
<div class="a" style="left:641px;top:229px;width:422px;height:240px;background:#fff;border:3px solid #2a72b8;"></div>
<div class="a" style="left:652px;top:243px;width:401px;height:207px;background:#e9e9e9;"></div>
<div class="a" style="left:658px;top:252.2px;width:121.5px;height:57.400000000000034px;background:#fff;border:1.3px solid #8c8c8c;border-radius:6px;"></div>
<div class="a t" style="left:718.75px;top:267.48px;transform:translateX(-50%) scaleX(0.82);font-size:12.5px;line-height:14.37px;color:#333;-webkit-text-stroke:0.2px #333;">Автоматтандырылған</div>
<div class="a t" style="left:718.75px;top:284.88px;transform:translateX(-50%) scaleX(0.82);font-size:12.5px;line-height:14.37px;color:#333;-webkit-text-stroke:0.2px #333;">сапа бақылауы</div>
<div class="a" style="left:788px;top:252.2px;width:127.70000000000005px;height:57.400000000000034px;background:#fff;border:1.3px solid #8c8c8c;border-radius:6px;"></div>
<div class="a t" style="left:851.85px;top:276.18px;transform:translateX(-50%) scaleX(0.82);font-size:12.5px;line-height:14.37px;color:#333;-webkit-text-stroke:0.2px #333;">Кері байланыс</div>
<div class="a" style="left:924.4px;top:252.2px;width:121.60000000000002px;height:57.400000000000034px;background:#fff;border:1.3px solid #8c8c8c;border-radius:6px;"></div>
<div class="a t" style="left:985.2px;top:267.48px;transform:translateX(-50%) scaleX(0.82);font-size:12.5px;line-height:14.37px;color:#333;-webkit-text-stroke:0.2px #333;">Аралық интервалдық</div>
<div class="a t" style="left:985.2px;top:284.88px;transform:translateX(-50%) scaleX(0.82);font-size:12.5px;line-height:14.37px;color:#333;-webkit-text-stroke:0.2px #333;">оқыту</div>
<div class="a" style="left:658px;top:319px;width:121.5px;height:57.30000000000001px;background:#fff;border:1.3px solid #8c8c8c;border-radius:6px;"></div>
<div class="a t" style="left:718.75px;top:342.93px;transform:translateX(-50%) scaleX(0.82);font-size:12.5px;line-height:14.37px;color:#333;-webkit-text-stroke:0.2px #333;">Бейімдеп оқыту</div>
<div class="a" style="left:788px;top:319px;width:127.70000000000005px;height:57.30000000000001px;background:#fff;border:1.3px solid #8c8c8c;border-radius:6px;"></div>
<div class="a t" style="left:851.85px;top:323.11px;transform:translateX(-50%) scaleX(0.82);font-size:13.5px;line-height:15.52px;color:#333;font-weight:bold;">Білім беру</div>
<div class="a t" style="left:851.85px;top:342.01px;transform:translateX(-50%) scaleX(0.82);font-size:13.5px;line-height:15.52px;color:#333;font-weight:bold;">жүйесіндегі жасанды</div>
<div class="a t" style="left:851.85px;top:360.91px;transform:translateX(-50%) scaleX(0.82);font-size:13.5px;line-height:15.52px;color:#333;font-weight:bold;">интеллект</div>
<div class="a" style="left:924.4px;top:319px;width:121.60000000000002px;height:57.30000000000001px;background:#fff;border:1.3px solid #8c8c8c;border-radius:6px;"></div>
<div class="a t" style="left:985.2px;top:334.23px;transform:translateX(-50%) scaleX(0.82);font-size:12.5px;line-height:14.37px;color:#333;-webkit-text-stroke:0.2px #333;">Деректерді жинау және</div>
<div class="a t" style="left:985.2px;top:351.63px;transform:translateX(-50%) scaleX(0.82);font-size:12.5px;line-height:14.37px;color:#333;-webkit-text-stroke:0.2px #333;">материалдарды іріктеу</div>
<div class="a" style="left:658px;top:386px;width:121.5px;height:57px;background:#fff;border:1.3px solid #8c8c8c;border-radius:6px;"></div>
<div class="a t" style="left:718.75px;top:401.08px;transform:translateX(-50%) scaleX(0.82);font-size:12.5px;line-height:14.37px;color:#333;-webkit-text-stroke:0.2px #333;">Мұғалімнің</div>
<div class="a t" style="left:718.75px;top:418.48px;transform:translateX(-50%) scaleX(0.82);font-size:12.5px;line-height:14.37px;color:#333;-webkit-text-stroke:0.2px #333;">виртуалды көмекшісі</div>
<div class="a" style="left:788px;top:386px;width:127.70000000000005px;height:57px;background:#fff;border:1.3px solid #8c8c8c;border-radius:6px;"></div>
<div class="a t" style="left:851.85px;top:409.78px;transform:translateX(-50%) scaleX(0.82);font-size:12.5px;line-height:14.37px;color:#333;-webkit-text-stroke:0.2px #333;">Жеке оқыту</div>
<div class="a" style="left:924.4px;top:386px;width:121.60000000000002px;height:57px;background:#fff;border:1.3px solid #8c8c8c;border-radius:6px;"></div>
<div class="a t" style="left:985.2px;top:401.08px;transform:translateX(-50%) scaleX(0.82);font-size:12.5px;line-height:14.37px;color:#333;-webkit-text-stroke:0.2px #333;">Прокторинг (оқушының</div>
<div class="a t" style="left:985.2px;top:418.48px;transform:translateX(-50%) scaleX(0.82);font-size:12.5px;line-height:14.37px;color:#333;-webkit-text-stroke:0.2px #333;">адалдығын бақылау)</div>
<svg class="a" style="left:1028px;top:426px;" width="24" height="24" viewBox="0 0 24 24"><circle cx="9" cy="9" r="6" fill="#fff" fill-opacity="0.6" stroke="#888" stroke-width="1.2"/><path d="M13.5 13.5 L19 19" stroke="#888" stroke-width="2"/><path d="M6.5 9 H11.5 M9 6.5 V11.5" stroke="#999" stroke-width="0.9"/></svg>
<div class="a t " style="top:481.08px;font-size:20.1px;line-height:23.11px;color:#404040;font-family:'Liberation Serif',serif;left:657px;">Сурет 2. Білім беру саласындағы ЖИ бағыты</div>
<div class="a" style="left:619.2px;top:515.2px;width:486px;height:181px;background:#fff;border:3px solid #2a72b8;"></div>
<div class="a" style="left:627.2px;top:520.25px;width:468.5px;font-size:14.05px;line-height:16.16px;color:#333;font-family:'Liberation Serif',serif;white-space:nowrap;"><b>Бейімдеп оқыту</b></div>
<div class="a" style="left:627.2px;top:537.17px;width:468.5px;font-size:14.05px;line-height:16.16px;color:#333;font-family:'Liberation Serif',serif;white-space:nowrap;text-align:justify;text-align-last:justify;">Бейімдеп оқыту – жасанды интеллектіні білім беру жүйесінде қолданудағы</div>
<div class="a" style="left:627.2px;top:554.09px;width:468.5px;font-size:14.05px;line-height:16.16px;color:#333;font-family:'Liberation Serif',serif;white-space:nowrap;">болашағы бар бағыттардың бірі.</div>
<div class="a" style="left:627.2px;top:571.01px;width:468.5px;font-size:14.05px;line-height:16.16px;color:#333;font-family:'Liberation Serif',serif;white-space:nowrap;text-align:justify;text-align-last:justify;">Жасанды интеллект әрбір шәкірттің оқу үлгерімін қадағалай алады. Оқу</div>
<div class="a" style="left:627.2px;top:587.93px;width:468.5px;font-size:14.05px;line-height:16.16px;color:#333;font-family:'Liberation Serif',serif;white-space:nowrap;text-align:justify;text-align-last:justify;">материалдарын баланың үлгеріміне қарай бөледі немесе оның қабілетіне</div>
<div class="a" style="left:627.2px;top:604.85px;width:468.5px;font-size:14.05px;line-height:16.16px;color:#333;font-family:'Liberation Serif',serif;white-space:nowrap;text-align:justify;text-align-last:justify;">қарай икемдейді. Мұғалімге қай материалдың нашар, қай материалдың</div>
<div class="a" style="left:627.2px;top:621.77px;width:468.5px;font-size:14.05px;line-height:16.16px;color:#333;font-family:'Liberation Serif',serif;white-space:nowrap;">жақсы меңгерілгені туралы ақпарат береді.</div>
<div class="a" style="left:627.2px;top:638.69px;width:468.5px;font-size:14.05px;line-height:16.16px;color:#333;font-family:'Liberation Serif',serif;white-space:nowrap;text-align:justify;text-align-last:justify;">Жасанды интеллектінің көмегімен бейімделген технологияны қолдануға</div>
<div class="a" style="left:627.2px;top:655.61px;width:468.5px;font-size:14.05px;line-height:16.16px;color:#333;font-family:'Liberation Serif',serif;white-space:nowrap;text-align:justify;text-align-last:justify;">мүмкіндік беретін платформалардың бірі – <b style="font-family:'Liberation Sans',sans-serif;font-size:13px">Stepik.</b> Бірақ мұндай</div>
<div class="a" style="left:627.2px;top:672.53px;width:468.5px;font-size:14.05px;line-height:16.16px;color:#333;font-family:'Liberation Serif',serif;white-space:nowrap;">платформада құрылған курстар саны әзірге оннан аспай тұр.</div>
<div class="a" style="left:1156px;top:0px;width:6px;height:850px;background:linear-gradient(90deg,rgba(0,0,0,0.10),rgba(0,0,0,0));"></div>
<!-- taskbar -->
<div class="a" style="left:0px;top:850px;width:1600px;height:50px;background:linear-gradient(90deg,#e7eef8 0%,#e3ebf8 30%,#e0e8f8 60%,#e2ebf7 100%);"></div>
<div class="a" style="left:0px;top:850px;width:1600px;height:1px;background:#d8dde6;"></div>
<svg class="a" style="left:0px;top:0px;" width="1600" height="900" viewBox="0 0 1600 900"><path d="M24 883 Q20 883 20 879 Q20 875 24.5 875 Q25.5 869 31.5 869 Q36 869 38 873 Q41 871.5 44 873.5 Q47 875.5 46.5 879 Q46.5 883 42.5 883Z" fill="#a8c4e8"/><rect x="418" y="864" width="11.6" height="11" rx="1" fill="#1a8ad8"/><rect x="418" y="876.1" width="11.6" height="11" rx="1" fill="#1a8ad8"/><rect x="430.7" y="864" width="11.6" height="11" rx="1" fill="#1a8ad8"/><rect x="430.7" y="876.1" width="11.6" height="11" rx="1" fill="#1a8ad8"/><rect x="418" y="864" width="24.3" height="23.1" fill="url(#wg)" opacity="0.5"/><defs><linearGradient id="wg" x1="0" y1="0" x2="1" y2="1"><stop offset="0" stop-color="#4fd0ff"/><stop offset="1" stop-color="#0060c0"/></linearGradient></defs><rect x="457.5" y="859.5" width="227" height="32" rx="16" fill="#fdfdfe" stroke="#e2e6ee" stroke-width="1"/><circle cx="479" cy="872.5" r="5.3" fill="none" stroke="#222" stroke-width="1.8"/><path d="M475.3 876.3 L470 881.5" stroke="#222" stroke-width="2"/><path d="M629 889.3 Q632 875 640 871 Q646 868 650 872 L650 889.3Z" fill="#6f7a3c"/><path d="M647 889.3 L649 870 Q652 862 658 864 Q662 867 661 876 L661 889.3Z" fill="#8a6a3e"/><path d="M650 866 Q655 862 659 866 L656 872Z" fill="#7a8a3a"/><path d="M660 889.3 Q661 872 670 868 Q680 866 684 878 L684 889.3Z" fill="#7f8d40"/><path d="M664 874 Q672 869 680 874 L676 879Z" fill="#a69a50"/><path d="M640 876 Q632 880 631 889.3 H640Z" fill="#5c6a30"/><rect x="643.5" y="872" width="4" height="17.3" fill="#a8d8ec"/><rect x="655" y="869" width="4.5" height="20.3" fill="#b0dcee"/><path d="M640 885 Q655 880 670 886 L670 889.3 H640Z" fill="#6cc0e0"/><defs><linearGradient id="tvg" x1="0" y1="1" x2="1" y2="0"><stop offset="0" stop-color="#a9adb5"/><stop offset="1" stop-color="#ffffff"/></linearGradient></defs><rect x="697.5" y="869" width="20" height="17.5" rx="2" fill="#262626"/><rect x="703" y="863.2" width="20" height="16.5" rx="2" fill="url(#tvg)" stroke="#e8eaee" stroke-width="0.6"/><circle cx="755.8" cy="875.5" r="12.5" fill="#7b6fd6"/><circle cx="755.8" cy="875.5" r="9" fill="#5a4fc0"/><rect x="749.5" y="870.5" width="9" height="9" rx="1.5" fill="#fff"/><path d="M758.5 873.5 L763 871 V879 L758.5 876.5Z" fill="#fff"/><path d="M745 886 L749 881 L752 884Z" fill="#7b6fd6"/><ellipse cx="802" cy="875.5" rx="11.8" ry="12.8" fill="#e0202a"/><ellipse cx="802" cy="875.5" rx="4.5" ry="9" fill="#fdf0f0"/><ellipse cx="802" cy="875.5" rx="3" ry="8" fill="#e8dede"/><defs><linearGradient id="eg" x1="0" y1="1" x2="1" y2="0"><stop offset="0" stop-color="#0a5cb0"/><stop offset="0.55" stop-color="#1d97dc"/><stop offset="1" stop-color="#5ad06a"/></linearGradient></defs><circle cx="848.3" cy="875.5" r="12.6" fill="url(#eg)"/><path d="M840 882 Q838 874 845 871 Q852 868.5 857 872.5 Q860 876 857.5 879 Q854 882 849.5 880.5 Q846 879 847 876 Q843 876 842 880Z" fill="#e2e9f6"/><path d="M836.5 880 Q840 889 850 888.5 Q857 888 860 884 Q852 887 846 884 Q840 881 836.5 880Z" fill="#0b4a90"/><circle cx="893.5" cy="875.5" r="12.7" fill="#f33a1c"/><path d="M929 868 H950 V884 Q950 888 946 888 H933 Q929 888 929 884Z" fill="#1b4f9a"/><path d="M935 868 Q935 862 939.5 862 Q944 862 944 868" fill="none" stroke="#1b4f9a" stroke-width="1.8"/><rect x="935" y="872" width="4" height="4" fill="#f25022"/><rect x="940" y="872" width="4" height="4" fill="#7fba00"/><rect x="935" y="877" width="4" height="4" fill="#00a4ef"/><rect x="940" y="877" width="4" height="4" fill="#ffb900"/><circle cx="986" cy="875.5" r="12.6" fill="#c8281c"/><circle cx="984" cy="872" r="8" fill="#e85a40" opacity="0.6"/><path d="M980 886 Q982 874 986 870 Q989 867 993 868 L992.5 870.5 Q989 870 987.5 873 H991 L990 875.5 H986.5 Q984 881 980 886Z" fill="#fff"/><path d="M1019 866 H1029 L1032 869 H1044 V888 H1019Z" fill="#f5c33b"/><path d="M1019 871 H1044 V888 H1019Z" fill="#ffd766"/><rect x="1025" y="883" width="13" height="4" fill="#1878d8"/><circle cx="1076.5" cy="875.5" r="12.6" fill="#db4437"/><path d="M1076.5 875.5 L1065.6 881.8 A12.6 12.6 0 0 0 1076.5 888.1 A12.6 12.6 0 0 0 1087.4 881.8Z" fill="#0f9d58"/><path d="M1076.5 875.5 L1087.4 881.8 A12.6 12.6 0 0 0 1089.1 875.5 A12.6 12.6 0 0 0 1087.4 869.2 H1076.5Z" fill="#f4b400"/><path d="M1076.5 875.5 L1065.6 881.8 L1071 872 Z" fill="#0f9d58"/><circle cx="1076.5" cy="875.5" r="5.7" fill="#fff"/><circle cx="1076.5" cy="875.5" r="4.5" fill="#4285f4"/><circle cx="1085" cy="865" r="7.5" fill="#e55a3c" stroke="#e3eaf7" stroke-width="1"/><rect x="1073" y="892" width="7" height="2.5" rx="1.2" fill="#888"/><rect x="1103.5" y="855.5" width="39" height="38.5" rx="5" fill="#f4f7fc" stroke="#e6ebf3" stroke-width="1"/><path d="M1119 863.5 L1134.5 865 V884 L1119 886Z" fill="#d9502c"/><path d="M1124 869 H1132 M1124 873 H1132 M1124 877 H1132 M1124 881 H1132" stroke="#fff" stroke-width="1.3"/><path d="M1126 869.5 A3.6 3.6 0 1 1 1126.2 876.8" fill="none" stroke="#d9502c" stroke-width="0"/><path d="M1112 866 L1124.5 864 V885 L1112 883Z" fill="#c43e1c"/><rect x="1115" y="892" width="16" height="3" rx="1.5" fill="#2a7ad8"/><path d="M1164 863.5 L1180.5 865 V884 L1164 886Z" fill="#2b65b8"/><path d="M1169 869 H1178 M1169 873 H1178 M1169 877 H1178 M1169 881 H1178" stroke="#fff" stroke-width="1.3"/><path d="M1157.5 866 L1170 864 V885 L1157.5 883Z" fill="#1f4f9a"/><rect x="1166" y="892" width="6.5" height="2.5" rx="1.2" fill="#777"/><path d="M1306.5 879 L1313 872 L1319.5 879" fill="none" stroke="#222" stroke-width="1.3"/><path d="M1332 874 Q1334 867 1340 867 Q1345 867 1346 871 M1346 867 V871.5 H1341.5 M1332 884 V879 H1336.5 M1332 879 Q1334 884 1339 884" fill="none" stroke="#333" stroke-width="1.4"/><circle cx="1342.5" cy="879.5" r="3.7" fill="#1a73e8"/><rect x="1364.2" y="866.5" width="6.5" height="11" rx="3.2" fill="none" stroke="#2a6ad0" stroke-width="1.6"/><path d="M1361.5 874 Q1361.5 881 1367.5 881 Q1373.5 881 1373.5 874 M1367.5 881 V884.5" fill="none" stroke="#2a6ad0" stroke-width="1.5"/><path d="M1438.5 873 Q1446.5 865.5 1454.5 873 M1441.5 876 Q1446.5 871 1451.5 876 M1444 879 Q1446.5 876.5 1449 879" fill="none" stroke="#222" stroke-width="1.5"/><circle cx="1446.5" cy="880.8" r="1.3" fill="#222"/><path d="M1463.5 872 H1467 L1471.5 868 V884 L1467 880 H1463.5Z" fill="none" stroke="#222" stroke-width="1.3" stroke-linejoin="round"/><path d="M1474 872.5 Q1476 876 1474 879.5 M1477 870 Q1480 876 1477 882" fill="none" stroke="#222" stroke-width="1.3"/><rect x="1488" y="870.5" width="15" height="9" rx="2" fill="none" stroke="#222" stroke-width="1.3"/><rect x="1490" y="872.5" width="8" height="5" fill="#222"/><rect x="1503.5" y="873" width="1.8" height="4" fill="#222"/></svg>
<div class="a t " style="top:860.48px;font-size:12.5px;line-height:14.37px;color:#222;left:54.4px;letter-spacing:-0.3px;">2°C</div>
<div class="a t " style="top:876.39px;font-size:12.6px;line-height:14.49px;color:#555;left:54.4px;">Cloudy</div>
<div class="a t " style="top:867.15px;font-size:14.6px;line-height:16.79px;color:#555;left:495.7px;">Поиск</div>
<div class="a t " style="top:867.18px;font-size:15px;line-height:17.25px;color:#fff;font-weight:bold;left:893.5px;transform:translateX(-50%);">Я</div>
<div class="a t " style="top:868.44px;font-size:12px;line-height:13.8px;color:#fff;font-weight:bold;left:1118.2px;transform:translateX(-50%);">P</div>
<div class="a t " style="top:869.33px;font-size:10.5px;line-height:12.07px;color:#fff;font-weight:bold;left:1163.8px;transform:translateX(-50%);">W</div>
<div class="a t " style="top:861.13px;font-size:8px;line-height:9.2px;color:#fff;left:1085px;transform:translateX(-50%);">3</div>
<div class="a t " style="top:869.27px;font-size:12.3px;line-height:14.14px;color:#222;left:1396px;">ҚАЗ</div>
<div class="a t " style="top:859.28px;font-size:12.5px;line-height:14.37px;color:#222;right:20.59999999999991px;transform:scaleX(0.83);transform-origin:right;">15:10</div>
<div class="a t " style="top:876.08px;font-size:12.5px;line-height:14.37px;color:#222;right:20.59999999999991px;transform:scaleX(0.93);transform-origin:right;">06.12.2023</div>
</div></body></html>
